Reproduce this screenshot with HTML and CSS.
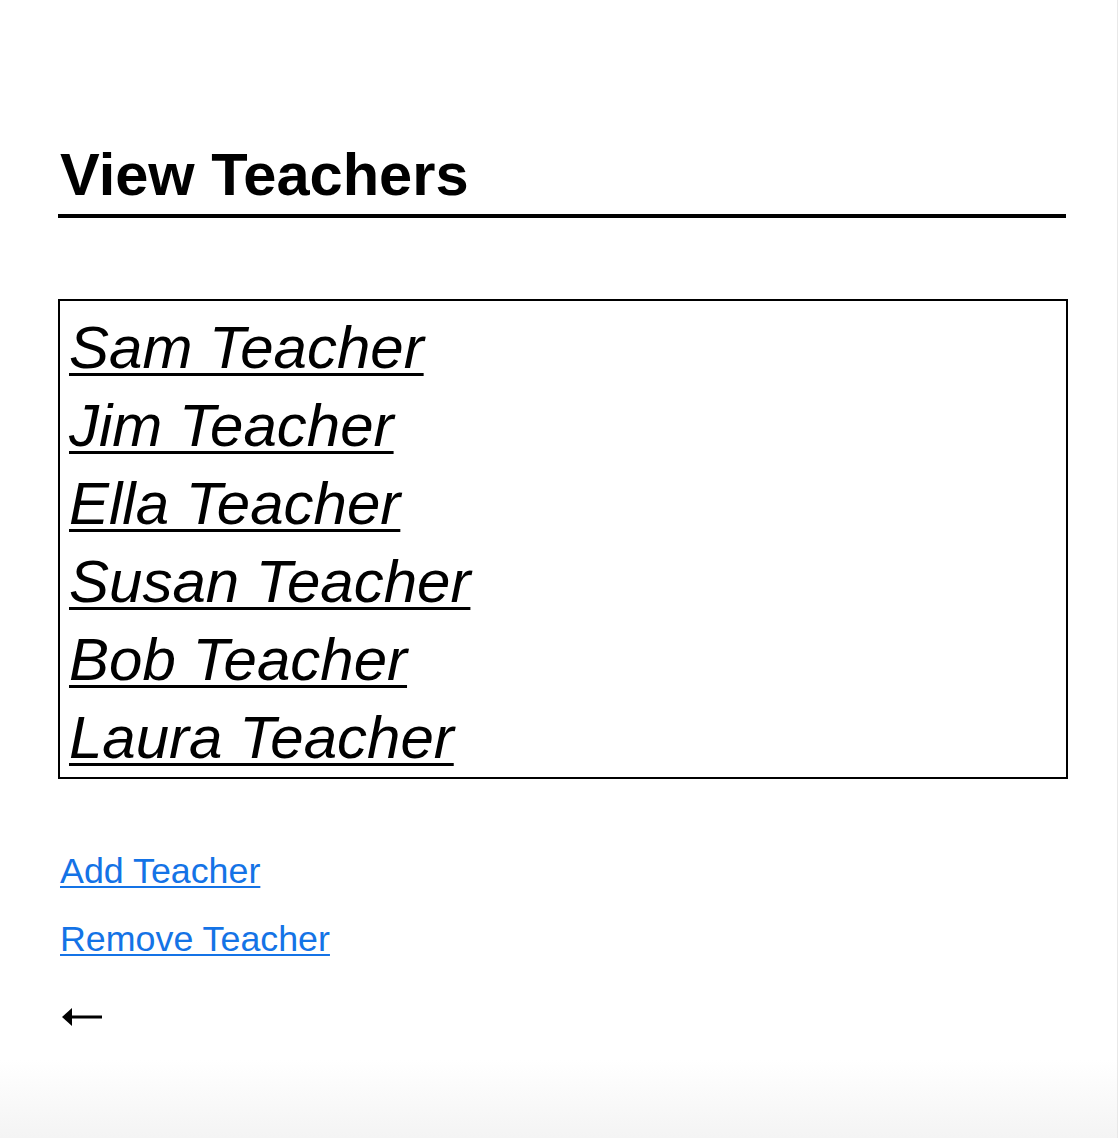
FILE: index.html
```html
<!DOCTYPE html>
<html lang="en">
<head>
<meta charset="utf-8">
<title>View Teachers</title>
<link rel="stylesheet" href="styles.css">
</head>
<body>
<main class="page">
  <h1 class="title">View Teachers</h1>
  <div class="teacher-list">
    <a class="teacher" href="#">Sam Teacher</a>
    <a class="teacher" href="#">Jim Teacher</a>
    <a class="teacher" href="#">Ella Teacher</a>
    <a class="teacher" href="#">Susan Teacher</a>
    <a class="teacher" href="#">Bob Teacher</a>
    <a class="teacher" href="#">Laura Teacher</a>
  </div>
  <nav class="actions">
    <a class="action" href="#">Add Teacher</a>
    <a class="action" href="#">Remove Teacher</a>
    <a class="back" href="#" aria-label="Back">
      <svg class="back-icon" width="40" height="18" viewBox="0 0 40 18">
        <polygon points="0,9 10,0 10,18" fill="#000"/>
        <rect x="8" y="7.5" width="32" height="3" fill="#000"/>
      </svg>
    </a>
  </nav>
</main>
</body>
</html>
```
FILE: styles.css
```css
html {
  min-height: 100%;
  background: linear-gradient(to bottom, #ffffff 0, #ffffff 1060px, #f4f4f4 1138px);
  border-right: 1px solid #e8e8e8;
}
body {
  margin: 0;
  font-family: "Liberation Sans", Arial, Helvetica, sans-serif;
  color: #000;
}
.page {
  margin-left: 58px;
  width: 1010px;
  padding-top: 140px;
}
.title {
  margin: 0;
  width: 1006px;
  font-size: 59.6px;
  font-weight: bold;
  line-height: 70px;
  padding-left: 2px;
  padding-bottom: 4px;
  border-bottom: 4px solid #000;
}
.teacher-list {
  margin-top: 81px;
  border: 2px solid #000;
  padding: 8px 0 0 9px;
}
.teacher {
  display: block;
  font-size: 60px;
  font-style: italic;
  line-height: 78px;
  color: #000;
  text-decoration: underline;
  text-decoration-thickness: 3px;
  text-underline-offset: 5px;
  width: max-content;
}
.actions {
  margin-top: 72px;
  display: flex;
  flex-direction: column;
  align-items: flex-start;
  gap: 28px;
  padding-left: 2px;
}
.action {
  font-size: 35.8px;
  line-height: 40px;
  color: #1473e6;
  text-decoration: underline;
  text-decoration-thickness: 2px;
  text-underline-offset: 3px;
}
.back {
  display: flex;
  align-items: center;
  height: 40px;
  margin-top: 10px;
  padding-left: 2px;
}
.back-icon {
  display: block;
}
```
